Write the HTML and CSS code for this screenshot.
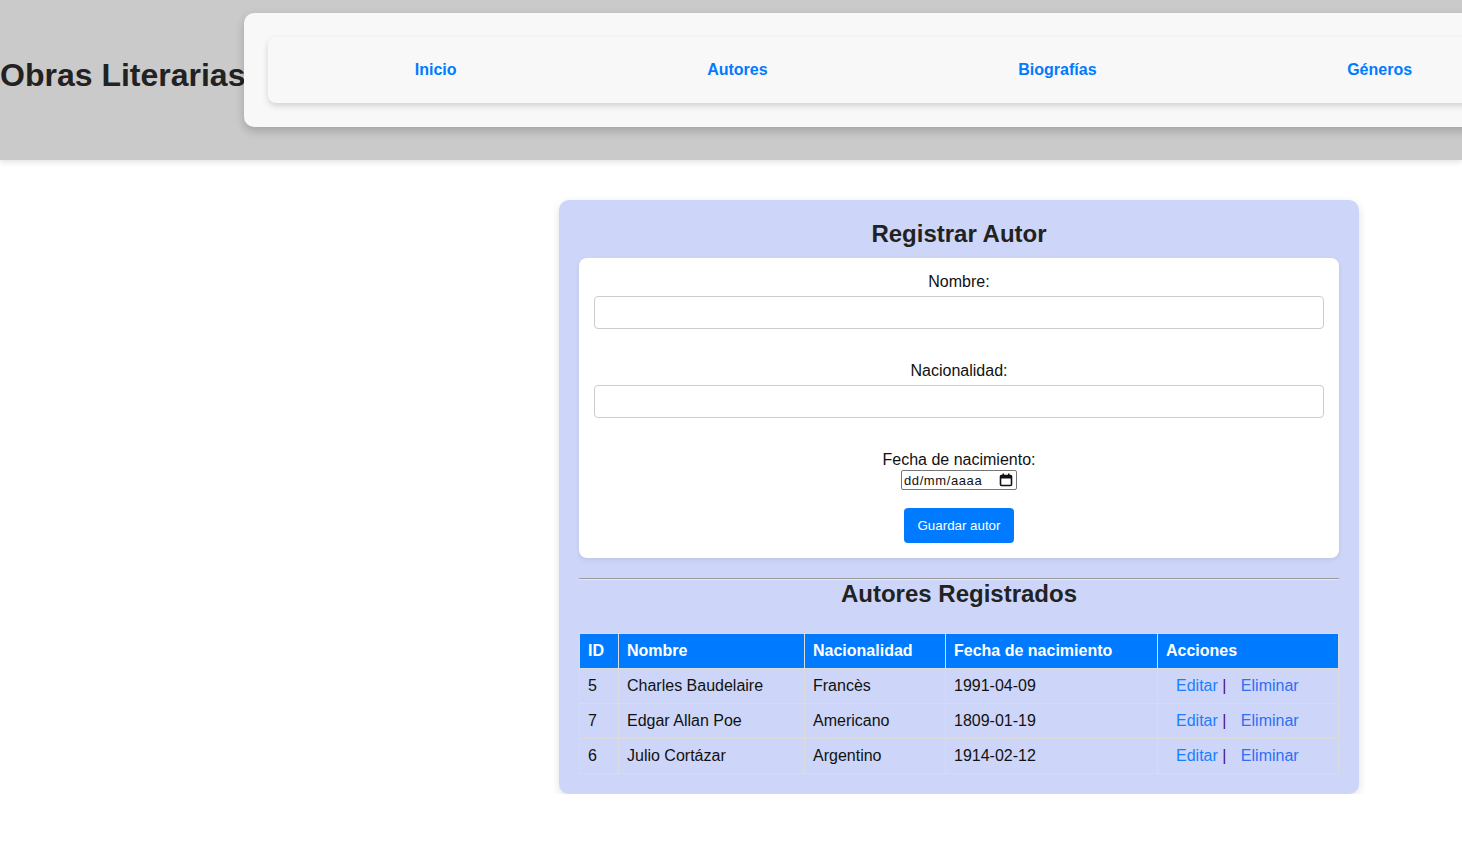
FILE: index.html
```html
<!DOCTYPE html>
<html lang="es">
<head>
<meta charset="utf-8">
<title>Obras Literarias</title>
<link rel="stylesheet" href="styles.css">
</head>
<body>
<header class="site-header">
  <h1 class="brand">Obras Literarias</h1>
  <nav class="nav-box">
    <ul class="nav-list">
      <li><a class="nav-link" href="#">Inicio</a></li>
      <li><a class="nav-link" href="#">Autores</a></li>
      <li><a class="nav-link" href="#">Biografías</a></li>
      <li><a class="nav-link" href="#">Géneros</a></li>
    </ul>
  </nav>
</header>

<main class="card">
  <h2 class="card-title">Registrar Autor</h2>
  <form class="form-box">
    <label class="field-label">Nombre:</label>
    <input class="text-input" type="text">
    <label class="field-label gap">Nacionalidad:</label>
    <input class="text-input" type="text">
    <label class="field-label gap">Fecha de nacimiento:</label>
    <div class="date-row">
      <span class="date-field"><span class="date-text">dd/mm/aaaa</span>
        <svg class="cal" width="14" height="14" viewBox="0 0 14 14"><rect x="1.5" y="2.5" width="11" height="10" rx="1" fill="none" stroke="#111" stroke-width="1.6"/><rect x="1.5" y="2.5" width="11" height="3" fill="#111"/><rect x="3.5" y="0.5" width="1.5" height="2.5" fill="#111"/><rect x="9" y="0.5" width="1.5" height="2.5" fill="#111"/></svg>
      </span>
    </div>
    <div class="btn-row"><button class="btn" type="button">Guardar autor</button></div>
  </form>

  <hr class="divider">
  <h2 class="card-title second">Autores Registrados</h2>

  <table class="authors">
    <thead>
      <tr>
        <th class="c-id">ID</th>
        <th class="c-name">Nombre</th>
        <th class="c-nat">Nacionalidad</th>
        <th class="c-date">Fecha de nacimiento</th>
        <th class="c-act">Acciones</th>
      </tr>
    </thead>
    <tbody>
      <tr>
        <td>5</td><td>Charles Baudelaire</td><td>Francès</td><td>1991-04-09</td>
        <td><a class="act edit" href="#">Editar</a> <span class="sep">|</span> <a class="act del" href="#">Eliminar</a></td>
      </tr>
      <tr>
        <td>7</td><td>Edgar Allan Poe</td><td>Americano</td><td>1809-01-19</td>
        <td><a class="act edit" href="#">Editar</a> <span class="sep">|</span> <a class="act del" href="#">Eliminar</a></td>
      </tr>
      <tr>
        <td>6</td><td>Julio Cortázar</td><td>Argentino</td><td>1914-02-12</td>
        <td><a class="act edit" href="#">Editar</a> <span class="sep">|</span> <a class="act del" href="#">Eliminar</a></td>
      </tr>
    </tbody>
  </table>
</main>
</body>
</html>
```
FILE: styles.css
```css
html, body {
  overflow-x: hidden;
}
body {
  margin: 0;
  font-family: "Liberation Sans", Arial, sans-serif;
  background: #fff;
  color: #111;
}
.site-header {
  display: flex;
  align-items: flex-start;
  height: 160px;
  background: #cacaca;
  box-shadow: 0 2px 6px rgba(0, 0, 0, 0.12);
}
.brand {
  margin: 57px 0 0 0;
  font-size: 32px;
  font-weight: bold;
  color: #222;
  white-space: nowrap;
}
.nav-box {
  flex-shrink: 0;
  width: 1338px;
  margin-top: 13px;
  margin-left: -1px;
  padding: 24px;
  box-sizing: border-box;
  height: 114px;
  background: #f8f8f8;
  border-radius: 10px;
  box-shadow: 0 4px 10px rgba(0, 0, 0, 0.2);
}
.nav-list {
  list-style: none;
  margin: 0;
  padding: 0 21px;
  height: 66px;
  display: flex;
  justify-content: space-around;
  align-items: center;
  background: #f8f8f8;
  border-radius: 8px;
  box-shadow: 0 3px 6px rgba(0, 0, 0, 0.15);
}
.nav-link {
  color: #007bff;
  font-weight: bold;
  font-size: 16px;
  text-decoration: none;
}
.card {
  display: block;
  width: 800px;
  box-sizing: border-box;
  margin: 40px 0 0 559px;
  padding: 20px;
  background: #cdd6f8;
  border-radius: 10px;
  box-shadow: 0 3px 8px rgba(0, 0, 0, 0.12);
}
.card-title {
  margin: 0 0 10px;
  font-size: 24px;
  font-weight: bold;
  text-align: center;
  color: #222;
}
.card-title.second {
  margin: 0 0 25px;
}
.form-box {
  background: #fff;
  border-radius: 8px;
  padding: 15px 15px 15px;
  box-shadow: 0 2px 5px rgba(0, 0, 0, 0.08);
  text-align: center;
}
.field-label {
  display: block;
  font-size: 16px;
  line-height: 18px;
  color: #111;
}
.field-label.gap {
  margin-top: 33px;
}
.text-input {
  display: block;
  width: 100%;
  box-sizing: border-box;
  margin-top: 5px;
  height: 33px;
  padding: 8px;
  border: 1px solid #ccc;
  border-radius: 4px;
  font-size: 14px;
  font-family: inherit;
}
.date-row {
  margin-top: 1px;
  display: flex;
  justify-content: center;
}
.date-field {
  display: inline-flex;
  align-items: center;
  justify-content: space-between;
  width: 116px;
  height: 20px;
  box-sizing: border-box;
  border: 1px solid #767676;
  border-radius: 2px;
  padding: 0 3px 0 2px;
  font-size: 13px;
  color: #111;
}
.date-text {
  letter-spacing: 0.6px;
}
.cal {
  display: block;
}
.btn-row {
  margin-top: 18px;
}
.btn {
  background: #007bff;
  color: #fff;
  border: none;
  border-radius: 4px;
  height: 35px;
  padding: 0 14px;
  font-size: 13.33px;
  font-family: inherit;
}
.divider {
  border: 0;
  border-top: 1px solid #999;
  border-bottom: 1px solid #e6e9f8;
  margin: 20px 0 0;
}
.authors {
  width: 100%;
  border-collapse: collapse;
  font-size: 16px;
}
.authors th,
.authors td {
  border: 1px solid #dcdcdc;
  padding: 8px;
  text-align: left;
  line-height: 18px;
}
.authors th {
  background: #007bff;
  color: #fff;
  font-weight: bold;
  height: 18px;
}
.authors td {
  height: 18px;
  padding-top: 8px;
  padding-bottom: 8px;
}
.c-id { width: 22px; }
.c-name { width: 169px; }
.c-nat { width: 124px; }
.c-date { width: 195px; }
.act {
  margin-left: 10px;
  text-decoration: none;
}
.edit { color: #1a7fff; }
.del { color: #2f6ef5; }
.sep { color: #4b0f7a; }
```
